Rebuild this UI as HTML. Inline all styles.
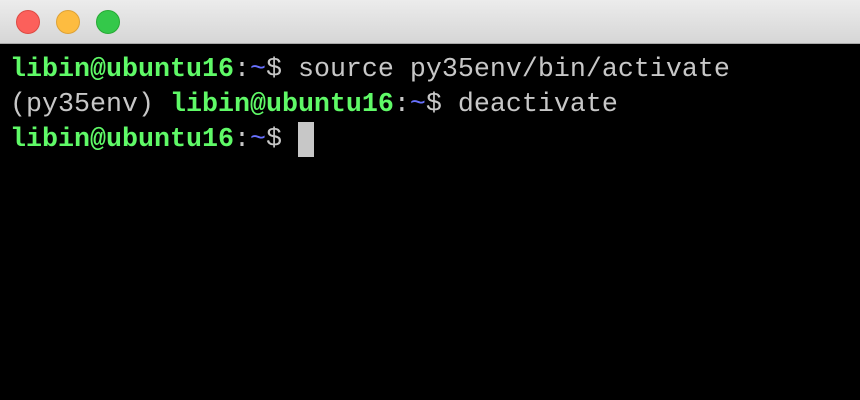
<!DOCTYPE html>
<html><head><meta charset="utf-8"><style>
html,body{margin:0;padding:0;width:860px;height:400px;overflow:hidden;background:#000}
.bar{position:absolute;left:0;top:0;width:860px;height:44px;background:linear-gradient(#ececec,#d6d6d6);border-bottom:1px solid #a8a8a8;box-sizing:border-box}
.b{position:absolute;top:10px;width:24px;height:24px;border-radius:50%;box-sizing:border-box}
.term{position:absolute;left:10px;top:53px;font-family:"Liberation Mono",monospace;font-size:26.67px;color:#c7c7c7;white-space:pre}
.term div{height:35px;line-height:34px}
.g{color:#5ff967;font-weight:bold}
.u{color:#6871ff}
.cur{position:absolute;left:298px;top:122px;width:16px;height:35px;background:#c7c7c7}
</style></head><body>
<div class="bar">
<div class="b" style="left:16px;background:#fc605b;border:1px solid #de4a43"></div>
<div class="b" style="left:56px;background:#fdbc40;border:1px solid #dea236"></div>
<div class="b" style="left:96px;background:#34c84a;border:1px solid #27aa35"></div>
</div>
<div class="term"><div><span class="g">libin@ubuntu16</span>:<span class="u">~</span>$ source py35env/bin/activate</div><div>(py35env) <span class="g">libin@ubuntu16</span>:<span class="u">~</span>$ deactivate</div><div><span class="g">libin@ubuntu16</span>:<span class="u">~</span>$ </div></div>
<div class="cur"></div>
</body></html>
